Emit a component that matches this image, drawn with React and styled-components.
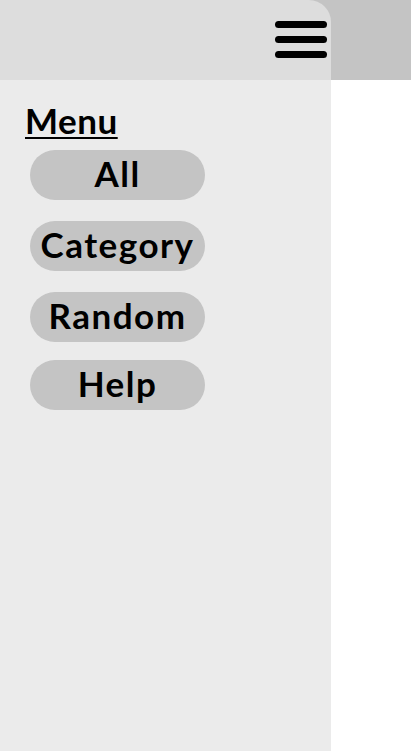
import styled, { createGlobalStyle } from "styled-components";

const GlobalStyle = createGlobalStyle`
  html, body, #root {
    margin: 0;
    padding: 0;
    height: 100%;
  }
  body {
    font-family: Lato, "Open Sans", sans-serif;
    background: #fff;
  }
`;

const items = [
  { label: "All", gap: 0 },
  { label: "Category", gap: 21 },
  { label: "Random", gap: 21 },
  { label: "Help", gap: 18 },
];

export default function App() {
  return (
    <>
      <GlobalStyle />
      <Page>
        <TopBar>
          <TopPanel>
            <Burger aria-label="Toggle menu">
              <span />
              <span />
              <span />
            </Burger>
          </TopPanel>
        </TopBar>
        <Body>
          <Sidebar>
            <Title>Menu</Title>
            <MenuList>
              {items.map((it) => (
                <MenuButton key={it.label} $gap={it.gap}>
                  {it.label}
                </MenuButton>
              ))}
            </MenuList>
          </Sidebar>
          <Main />
        </Body>
      </Page>
    </>
  );
}

const Page = styled.div`
  display: flex;
  flex-direction: column;
  height: 100vh;
`;

const TopBar = styled.header`
  display: flex;
  height: 80px;
  flex-shrink: 0;
  background: #c4c4c4;
`;

const TopPanel = styled.div`
  width: 331px;
  background: #dddddd;
  border-top-right-radius: 22px;
  display: flex;
  justify-content: flex-end;
  align-items: flex-start;
  padding: 21px 4px 0 0;
  box-sizing: border-box;
`;

const Burger = styled.button`
  display: flex;
  flex-direction: column;
  gap: 8px;
  width: 52px;
  padding: 0;
  border: none;
  background: none;
  cursor: pointer;

  span {
    display: block;
    height: 7px;
    border-radius: 4px;
    background: #000;
  }
`;

const Body = styled.div`
  display: flex;
  flex: 1;
`;

const Sidebar = styled.nav`
  width: 331px;
  background: #ebebeb;
  padding: 21px 0 0 25px;
  box-sizing: border-box;
`;

const Title = styled.h2`
  margin: 0;
  font-size: 35px;
  line-height: 38px;
  font-weight: 700;
  letter-spacing: 0.5px;
  color: #000;
  text-decoration: underline;
  text-decoration-thickness: 2px;
  text-underline-offset: 3px;
  display: inline-block;
`;

const MenuList = styled.div`
  display: flex;
  flex-direction: column;
  margin: 11px 0 0 5px;
`;

const MenuButton = styled.button`
  width: 175px;
  height: 50px;
  margin-top: ${({ $gap }) => $gap}px;
  border: none;
  border-radius: 25px;
  background: #c4c4c4;
  color: #000;
  font-family: inherit;
  font-size: 35px;
  font-weight: 700;
  letter-spacing: 1.5px;
  padding: 0 0 5px;
  white-space: nowrap;
  cursor: pointer;
`;

const Main = styled.main`
  flex: 1;
  background: #fff;
`;
